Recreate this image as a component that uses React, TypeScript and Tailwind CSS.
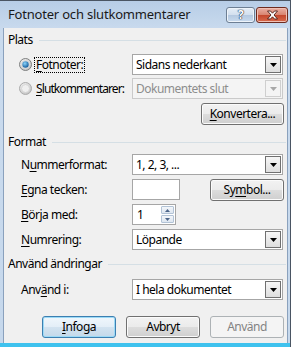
import React from 'react';

function U({ children }: { children: React.ReactNode }) {
  return <span className="underline underline-offset-[2px] decoration-[1px]">{children}</span>;
}

function Arrow({ disabled }: { disabled?: boolean }) {
  return (
    <svg width="7" height="4" viewBox="0 0 7 4">
      <path d="M0 0H7L3.5 4Z" fill={disabled ? '#a8a8a8' : '#000'} />
    </svg>
  );
}

function Combo({ value, disabled }: { value: string; disabled?: boolean }) {
  return (
    <div
      className={`flex h-[21px] w-[151px] border p-[1px] ${
        disabled ? 'border-[#cacaca] bg-[#f4f4f4] text-[#8d8d8d]' : 'border-[#a6a6a6] bg-white text-black'
      }`}
    >
      <div className="flex flex-1 items-center pl-[2px]">{value}</div>
      <div
        className={`flex w-[16px] items-center justify-center border ${
          disabled
            ? 'border-[#cfcfcf] bg-[#f4f4f4]'
            : 'border-[#707070] bg-[linear-gradient(to_bottom,#f6f6f6,#dedede)]'
        }`}
      >
        <Arrow disabled={disabled} />
      </div>
    </div>
  );
}

function Btn({
  children,
  w = 'w-[74px]',
  primary,
  disabled,
}: {
  children: React.ReactNode;
  w?: string;
  primary?: boolean;
  disabled?: boolean;
}) {
  let cls =
    'border-[#707070] bg-[linear-gradient(to_bottom,#f2f2f2_0%,#ebebeb_50%,#dddddd_50%,#cfcfcf_100%)] shadow-[inset_0_0_0_1px_#fbfbfb] text-black';
  if (primary)
    cls =
      'border-[#3c7fb1] bg-[linear-gradient(to_bottom,#f0f7fc_0%,#e3eef7_50%,#d3e3f0_50%,#c4d9ea_100%)] shadow-[inset_0_0_0_1px_#9cdaf6] text-black';
  if (disabled) cls = 'border-[#adb2b5] bg-[#f4f4f4] text-[#838383]';
  return (
    <div className={`flex h-[22px] ${w} items-center justify-center rounded-[3px] border ${cls}`}>
      {children}
    </div>
  );
}

function Radio({ checked, disabled }: { checked?: boolean; disabled?: boolean }) {
  return (
    <svg width="13" height="13" viewBox="0 0 13 13">
      <defs>
        <radialGradient id="rbg" cx="0.4" cy="0.35" r="0.7">
          <stop offset="0" stopColor="#ffffff" />
          <stop offset="1" stopColor={disabled ? '#d6d6d6' : '#bdbdbd'} />
        </radialGradient>
        <radialGradient id="rdot" cx="0.4" cy="0.35" r="0.7">
          <stop offset="0" stopColor="#8ad3fb" />
          <stop offset="1" stopColor="#0c5596" />
        </radialGradient>
      </defs>
      <circle cx="6.5" cy="6.5" r="6" fill="url(#rbg)" stroke={disabled ? '#acacac' : '#7f8081'} />
      <circle cx="6.5" cy="6.5" r="4" fill="#efefef" stroke="#cfcfcf" strokeWidth="0.8" />
      {checked && <circle cx="6.5" cy="6.5" r="3.2" fill="url(#rdot)" />}
    </svg>
  );
}

function Heading({ title }: { title: string }) {
  return (
    <div className="mr-[-2px] flex h-[16px] items-center">
      <span className="pr-[6px]">{title}</span>
      <div className="h-px flex-1 bg-[#d5dfe5]" />
    </div>
  );
}

export default function App() {
  return (
    <div className="flex h-[347px] w-[291px] flex-col border-t border-r border-[#4a5563] bg-[linear-gradient(to_bottom,#b7cde6,#cadbee_30px,#c6d8ec)] [font-family:'Noto_Sans',sans-serif] text-[12px] leading-[16px] tracking-[-0.5px] text-black">
      {/* title bar */}
      <div className="flex h-[27px] shrink-0">
        <div className="flex-1 pl-[8px] pt-[5px] text-[13px] leading-[17px] tracking-[-0.2px] text-[#1a1a1a]">
          Fotnoter och slutkommentarer
        </div>
        <div className="mr-[2px] mt-[6px] flex gap-[1px]">
          <div className="flex h-[16px] w-[29px] items-center justify-center rounded-[3px] border border-[#6d7f94] bg-[linear-gradient(to_bottom,#e6eef7_0%,#d2dfee_50%,#b4c8e0_50%,#c9dbee_100%)] shadow-[inset_0_0_0_1px_#eef4fa]">
            <span className="text-[12px] font-bold leading-[12px] text-white [text-shadow:0_0_1px_#1e2d44,0_0_1px_#1e2d44,0_0_1px_#1e2d44]">
              ?
            </span>
          </div>
          <div className="flex h-[16px] w-[32px] items-center justify-center rounded-[3px] border border-[#6e2b1f] bg-[linear-gradient(to_bottom,#eab0a4_0%,#d8836f_50%,#c3462c_50%,#d86a4c_100%)] shadow-[inset_0_0_0_1px_#f0c0b4]">
            <svg width="13" height="10" viewBox="0 0 13 10">
              <path
                d="M1.5 1H4.5L6.5 3.2L8.5 1H11.5L8 5L11.5 9H8.5L6.5 6.8L4.5 9H1.5L5 5Z"
                fill="#fff"
                stroke="#4a1a12"
                strokeWidth="0.9"
                strokeLinejoin="round"
              />
            </svg>
          </div>
        </div>
      </div>

      {/* client */}
      <div className="ml-[3px] mr-[2px] flex flex-1 flex-col border-l border-r border-[#8aa1bd] bg-[#f0f0f0] pl-[4px] pr-[3px]">
        <div className="mt-[4px]">
          <Heading title="Plats" />
        </div>

        <div className="mt-[6px] flex h-[21px] items-center">
          <div className="flex w-[124px] items-center pl-[11px]">
            <Radio checked />
            <span className="ml-[2px] border border-dotted border-black px-[1px] leading-[14px]">
              <U>F</U>otnoter:
            </span>
          </div>
          <Combo value="Sidans nederkant" />
        </div>

        <div className="mt-[3px] flex h-[21px] items-center">
          <div className="flex w-[124px] items-center pl-[11px]">
            <Radio disabled />
            <span className="ml-[4px] tracking-[-0.9px]">
              <U>S</U>lutkommentarer:
            </span>
          </div>
          <Combo value="Dokumentets slut" disabled />
        </div>

        <div className="mt-[4px] flex justify-end">
          <Btn w="w-[83px]">
            <span>
              <U>K</U>onvertera...
            </span>
          </Btn>
        </div>

        <div className="mt-[9px]">
          <Heading title="Format" />
        </div>

        <div className="mt-[4px] flex h-[21px] items-center">
          <div className="w-[124px] pl-[13px]">
            N<U>u</U>mmerformat:
          </div>
          <Combo value="1, 2, 3, ..." />
        </div>

        <div className="mt-[4px] flex h-[21px] items-center">
          <div className="w-[124px] pl-[13px]">
            <U>E</U>gna tecken:
          </div>
          <div className="h-[21px] w-[48px] border border-[#a6a6a6] bg-white" />
          <div className="flex flex-1 justify-end">
            <Btn>
              <span>
                Sy<U>m</U>bol...
              </span>
            </Btn>
          </div>
        </div>

        <div className="mt-[4px] flex h-[21px] items-center">
          <div className="w-[124px] pl-[13px]">
            <U>B</U>örja med:
          </div>
          <div className="flex h-[21px] w-[44px] items-center border border-[#a6a6a6] bg-white p-[1px]">
            <div className="flex-1 pl-[3px]">1</div>
            <div className="flex h-full w-[13px] flex-col gap-[1px]">
              <div className="flex flex-1 items-center justify-center rounded-[1px] border border-[#b2c3d6] bg-[linear-gradient(to_bottom,#f3f6fa,#dde6f0)]">
                <svg width="5" height="3" viewBox="0 0 5 3">
                  <path d="M0 3H5L2.5 0Z" fill="#4c6589" />
                </svg>
              </div>
              <div className="flex flex-1 items-center justify-center rounded-[1px] border border-[#b2c3d6] bg-[linear-gradient(to_bottom,#f3f6fa,#dde6f0)]">
                <svg width="5" height="3" viewBox="0 0 5 3">
                  <path d="M0 0H5L2.5 3Z" fill="#4c6589" />
                </svg>
              </div>
            </div>
          </div>
        </div>

        <div className="mt-[4px] flex h-[21px] items-center">
          <div className="w-[124px] pl-[13px]">
            <U>N</U>umrering:
          </div>
          <Combo value="Löpande" />
        </div>

        <div className="mt-[6px]">
          <Heading title="Använd ändringar" />
        </div>

        <div className="mt-[7px] flex h-[21px] items-center">
          <div className="w-[124px] pl-[13px]">
            Anv<U>ä</U>nd i:
          </div>
          <Combo value="I hela dokumentet" />
        </div>

        <div className="mt-[16px] flex justify-end gap-[10px]">
          <Btn primary>
            <span>
              <U>I</U>nfoga
            </span>
          </Btn>
          <Btn>Avbryt</Btn>
          <Btn disabled>Använd</Btn>
        </div>
      </div>

      <div className="h-[4px] shrink-0 bg-[#3fc2ee]" />
    </div>
  );
}
